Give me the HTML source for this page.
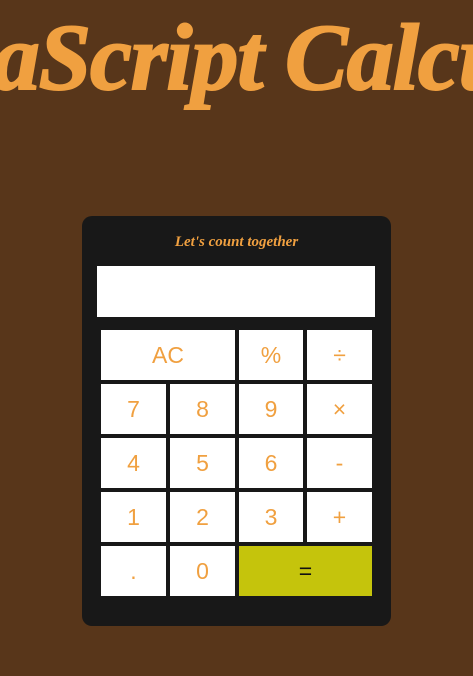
<!DOCTYPE html>
<html><head><style>
html,body{margin:0;padding:0;width:473px;height:676px;overflow:hidden;background:#58361a;font-family:"Liberation Sans",sans-serif}
.tw{position:absolute;left:0;top:0;width:473px;height:140px;overflow:hidden}
.title{position:absolute;left:-140px;top:4px;white-space:nowrap;font-family:"Liberation Serif",serif;font-weight:bold;font-style:italic;font-size:94px;color:#f0a040;letter-spacing:-1px;-webkit-text-stroke:2px #f0a040}
.card{position:absolute;left:82px;top:216px;width:309px;height:410px;background:#181818;border-radius:10px}
.sub{position:absolute;left:0;right:0;top:18px;text-align:center;font-family:"Liberation Serif",serif;font-weight:bold;font-style:italic;font-size:15px;color:#f0a040}
.disp{position:absolute;left:15px;top:50px;width:278px;height:51px;background:#fff}
.b{position:absolute;background:#fff;color:#f0a040;font-size:23px;display:flex;align-items:center;justify-content:center}
.eq{background:#c5c40c;color:#111}
</style></head><body>
<div class="tw"><div class="title">JavaScript Calculator</div></div>
<div class="card">
<div class="sub">Let's count together</div>
<div class="disp"></div>
</div>
<div class="b" style="left:101px;top:330px;width:134px;height:50px">AC</div>
<div class="b" style="left:239px;top:330px;width:64px;height:50px">%</div>
<div class="b" style="left:307px;top:330px;width:65px;height:50px">÷</div>
<div class="b" style="left:101px;top:384px;width:65px;height:50px">7</div>
<div class="b" style="left:170px;top:384px;width:65px;height:50px">8</div>
<div class="b" style="left:239px;top:384px;width:64px;height:50px">9</div>
<div class="b" style="left:307px;top:384px;width:65px;height:50px">×</div>
<div class="b" style="left:101px;top:438px;width:65px;height:50px">4</div>
<div class="b" style="left:170px;top:438px;width:65px;height:50px">5</div>
<div class="b" style="left:239px;top:438px;width:64px;height:50px">6</div>
<div class="b" style="left:307px;top:438px;width:65px;height:50px">-</div>
<div class="b" style="left:101px;top:492px;width:65px;height:50px">1</div>
<div class="b" style="left:170px;top:492px;width:65px;height:50px">2</div>
<div class="b" style="left:239px;top:492px;width:64px;height:50px">3</div>
<div class="b" style="left:307px;top:492px;width:65px;height:50px">+</div>
<div class="b" style="left:101px;top:546px;width:65px;height:50px">.</div>
<div class="b" style="left:170px;top:546px;width:65px;height:50px">0</div>
<div class="b eq" style="left:239px;top:546px;width:133px;height:50px">=</div>
</body></html>
